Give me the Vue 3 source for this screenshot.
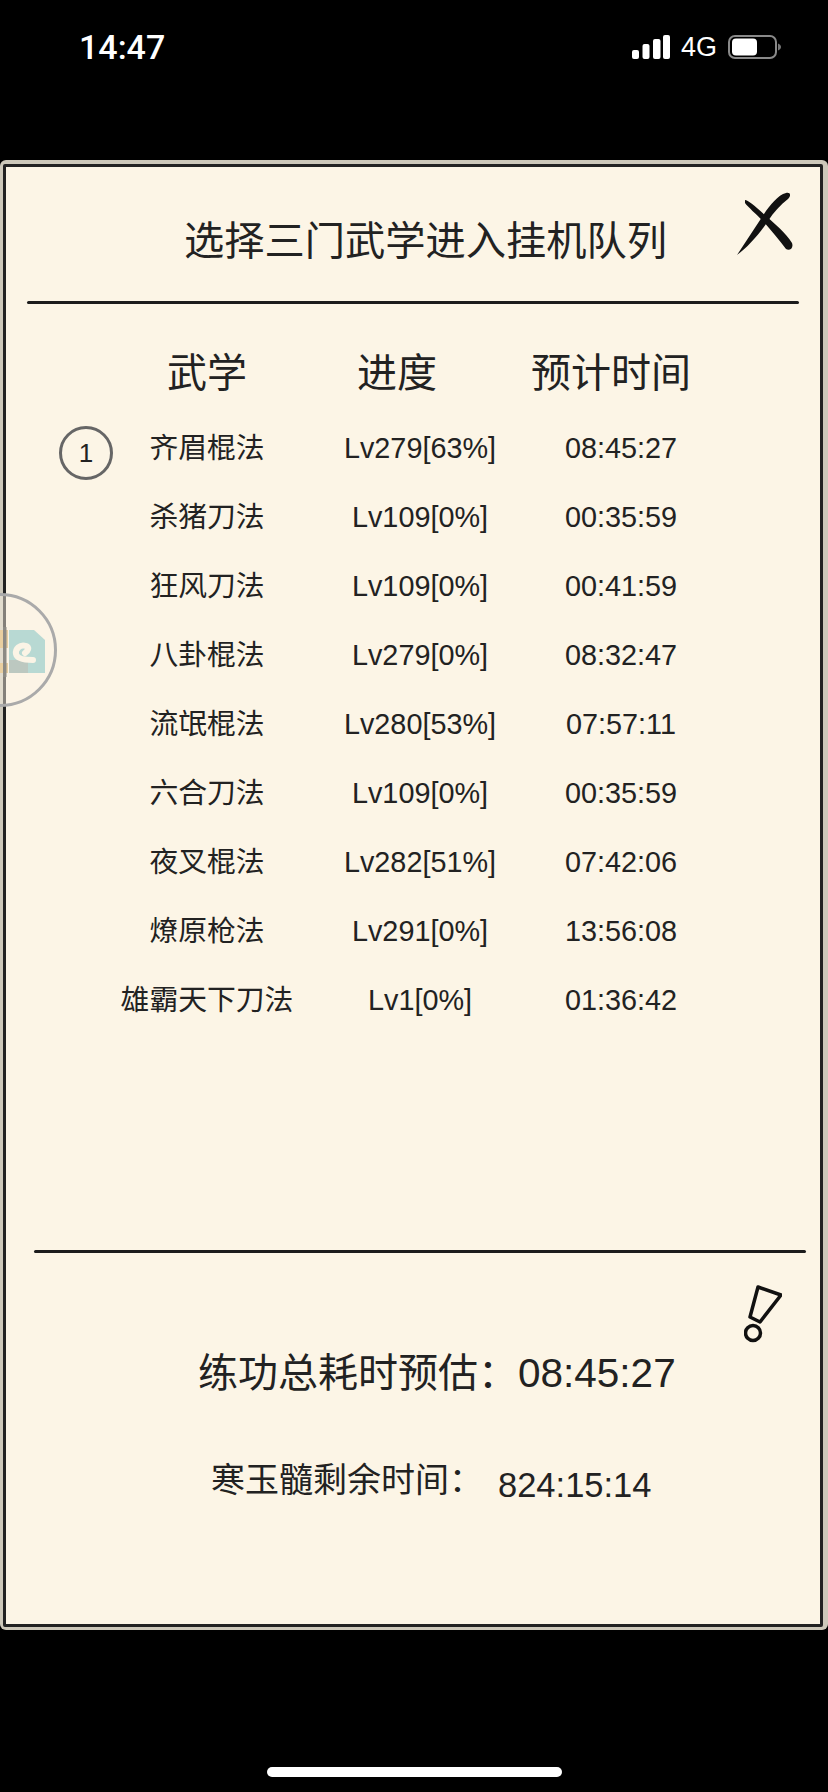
<template>
  <div class="screen">
    <div class="status">
      <span class="clock">14:47</span>
      <div class="status-right">
        <svg width="38" height="24" viewBox="0 0 38 24">
          <rect x="0" y="15" width="7" height="9" rx="2" fill="#fff" />
          <rect x="10.5" y="9" width="7" height="15" rx="2" fill="#fff" />
          <rect x="21" y="4" width="7.5" height="20" rx="2" fill="#fff" />
          <rect x="31" y="0" width="7" height="24" rx="2" fill="#fff" />
        </svg>
        <span class="net">4G</span>
        <svg width="53" height="24" viewBox="0 0 53 24">
          <rect x="1" y="1" width="47" height="22" rx="6" fill="none" stroke="#8a8a8a" stroke-width="2" />
          <rect x="4" y="3.5" width="25" height="17" rx="4" fill="#fff" />
          <path d="M50 8.5c2 .8 3 2 3 3.5s-1 2.700-3 3.500z" fill="#777" />
        </svg>
      </div>
    </div>

    <div class="frame">
      <div class="paper">
        <div class="float-btn">
          <svg width="56" height="50" viewBox="0 0 56 50">
            <rect x="0" y="3" width="8" height="18" fill="#e9cfa0" />
            <rect x="0" y="36" width="8" height="10" fill="#e9cfa0" />
            <rect x="3" y="0" width="3.500" height="50" fill="#8c8a84" />
            <path d="M9 3h25l11 10v33H9z" fill="#b8d9d3" />
            <path d="M9 33h19v13H9z" fill="#bcc8c0" />
            <path d="M25 26C28 24 30 20 26 19 20 17 15 22 16 27 17 32 24 33 33 33" fill="none" stroke="#fbf4e6" stroke-width="6" stroke-linecap="round" />
          </svg>
        </div>

        <div class="top">
          <h1 class="title">选择三门武学进入挂机队列</h1>
          <svg class="close" width="60" height="66" viewBox="15 11 60 66">
            <path d="M17 75 44 34C50 25 58 15 66 13 71 12 71 16 68 19 60 25 54 32 48 41 40 53 28 67 17 75Z" fill="#111" />
            <path d="M25 20C28 20 35 26 46 36 55 44 66 53 72 63 74 69 69 71 66 69 59 60 51 50 43 41 36 34 28 27 25 23Z" fill="#111" />
          </svg>
        </div>
        <div class="rule rule-top"></div>

        <div class="thead">
          <span>武学</span>
          <span>进度</span>
          <span>预计时间</span>
        </div>

        <div class="rows">
          <div v-for="(s, i) in skills" :key="s.name" class="row">
            <span v-if="i === 0" class="badge">1</span>
            <span class="name">{{ s.name }}</span>
            <span class="num">{{ s.level }}</span>
            <span class="num">{{ s.time }}</span>
          </div>
        </div>

        <div class="rule rule-bottom"></div>

        <div class="notice">
          <svg width="38" height="58" viewBox="0 0 38 58">
            <path d="M14 2 37 10 16 37 6 32Z" fill="none" stroke="#111" stroke-width="3.500" stroke-linejoin="round" />
            <circle cx="9" cy="48" r="7.500" fill="none" stroke="#111" stroke-width="3.500" />
          </svg>
        </div>

        <div class="total">
          <span>练功总耗时预估：</span>
          <span class="total-num">08:45:27</span>
        </div>
        <div class="remain">
          <span>寒玉髓剩余时间：</span>
          <span class="remain-num">824:15:14</span>
        </div>
      </div>
    </div>

    <div class="home-area">
      <div class="home-bar"></div>
    </div>
  </div>
</template>

<script setup>
const skills = [
  { name: '齐眉棍法', level: 'Lv279[63%]', time: '08:45:27' },
  { name: '杀猪刀法', level: 'Lv109[0%]', time: '00:35:59' },
  { name: '狂风刀法', level: 'Lv109[0%]', time: '00:41:59' },
  { name: '八卦棍法', level: 'Lv279[0%]', time: '08:32:47' },
  { name: '流氓棍法', level: 'Lv280[53%]', time: '07:57:11' },
  { name: '六合刀法', level: 'Lv109[0%]', time: '00:35:59' },
  { name: '夜叉棍法', level: 'Lv282[51%]', time: '07:42:06' },
  { name: '燎原枪法', level: 'Lv291[0%]', time: '13:56:08' },
  { name: '雄霸天下刀法', level: 'Lv1[0%]', time: '01:36:42' }
]
</script>

<style>
html,
body {
  background: #000;
}
</style>

<style scoped>
.screen {
  width: 828px;
  height: 1792px;
  background: #000;
  overflow: hidden;
  font-family: "Liberation Sans", "Noto Sans CJK SC", sans-serif;
  color: #222;
}
.status {
  height: 160px;
  box-sizing: border-box;
  padding: 27px 47px 0 79px;
  display: flex;
  justify-content: space-between;
  align-items: flex-start;
  color: #fff;
}
.clock {
  font-family: Roboto, sans-serif;
  font-weight: 500;
  font-size: 34px;
  line-height: 40px;
}
.status-right {
  display: flex;
  align-items: center;
  height: 40px;
  gap: 11px;
}
.net {
  font-size: 27px;
  line-height: 40px;
}
.frame {
  height: 1470px;
  box-sizing: border-box;
  padding: 4px 5px 3px 3px;
  background: #cdc8ba;
  border-radius: 6px;
}
.paper {
  position: relative;
  height: 100%;
  box-sizing: border-box;
  background: #fcf5e6;
  border: 3px solid #222;
  border-radius: 2px;
}
.float-btn {
  position: absolute;
  left: -6px;
  top: 426px;
  width: 114px;
  height: 114px;
  margin-left: -57px;
  box-sizing: border-box;
  padding: 31px 0 0 54px;
  border: 3px solid #aaa;
  border-radius: 50%;
  background: rgba(252, 245, 230, 0.45);
}
.top {
  height: 130px;
  box-sizing: border-box;
  padding: 24px 25px 0 178px;
  display: flex;
  justify-content: space-between;
}
.title {
  margin: 26px 0 0;
  font-size: 40.250px;
  line-height: 50px;
  font-weight: 400;
}
.rule {
  height: 3px;
  background: #1c1c1c;
  border-radius: 2px;
}
.rule-top {
  margin: 4px 21px 0 21px;
}
.thead {
  display: grid;
  grid-template-columns: 200px 180px 248px;
  margin: 44px 0 15px 101px;
  font-size: 40px;
  line-height: 50px;
  text-align: center;
}
.rows {
  margin-left: 101px;
}
.row {
  position: relative;
  display: grid;
  grid-template-columns: 200px 226px 176px;
  height: 69px;
  align-items: center;
  font-size: 28.800px;
  text-align: center;
}
.name {
  padding-bottom: 5px;
}
.num {
  padding-top: 2px;
}
.badge {
  position: absolute;
  left: -48px;
  top: 13px;
  width: 54px;
  height: 54px;
  box-sizing: border-box;
  border: 3px solid #666;
  border-radius: 50%;
  font-size: 26px;
  line-height: 48px;
}
.rule-bottom {
  margin: 216px 14px 0 28px;
}
.notice {
  height: 0;
  padding-left: 738px;
  padding-top: 32px;
}
.total {
  margin-top: 63px;
  padding-left: 192px;
  display: flex;
  font-size: 40px;
  line-height: 50px;
}
.total-num {
  font-size: 40.500px;
}
.remain {
  margin-top: 60px;
  padding-left: 205px;
  display: flex;
  align-items: flex-start;
  font-size: 34px;
  line-height: 44px;
}
.remain-num {
  margin-left: 15px;
  padding-top: 5px;
  font-size: 34.500px;
}
.home-area {
  height: 162px;
  box-sizing: border-box;
  padding-top: 137px;
  display: flex;
  justify-content: center;
}
.home-bar {
  width: 295px;
  height: 10px;
  background: #fff;
  border-radius: 5px;
}
</style>
